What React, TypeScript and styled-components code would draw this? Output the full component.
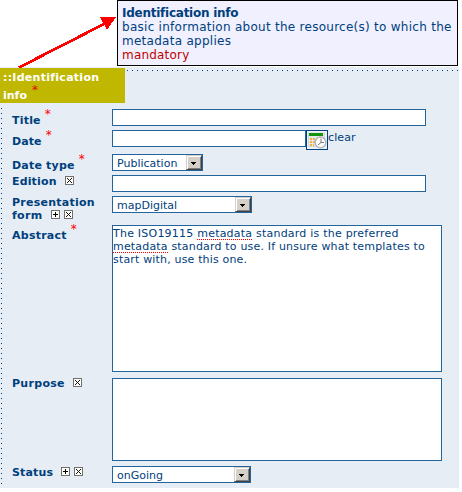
import React from "react";
import styled, { createGlobalStyle } from "styled-components";

const navy = "#00407c";
const edge = "#24649c";

const Global = createGlobalStyle`
  * { box-sizing: border-box; }
  html, body { margin: 0; padding: 0; background: #fff; overflow: hidden; }
  body { font-family: "DejaVu Sans", Verdana, sans-serif; color: ${navy}; }
`;

const Page = styled.main`
  position: relative;
  width: 459px;
  height: 488px;
  overflow: hidden;
`;

const Header = styled.header`
  height: 67px;
  padding-left: 117px;
`;

const Tip = styled.section`
  width: 341px;
  height: 66px;
  padding: 5px 0 0 4px;
  border: 1px solid #000;
  background: #f0f0ff;
`;

const TipLine = styled.p<{ $bold?: boolean; $red?: boolean; $track: number }>`
  margin: 0;
  height: 14px;
  font-size: 12px;
  line-height: 14px;
  white-space: nowrap;
  font-weight: ${(p) => (p.$bold ? 700 : 400)};
  color: ${(p) => (p.$red ? "#c00000" : navy)};
  letter-spacing: ${(p) => p.$track}px;
`;

const Arrow = styled.svg`
  position: absolute;
  left: 0;
  top: 0;
`;

const Panel = styled.section`
  height: 421px;
  padding-top: 1px;
  background:
    repeating-linear-gradient(to bottom, #e6edf5 0 4px, ${navy} 4px 5px) 1px 37px / 1px 384px no-repeat,
    repeating-linear-gradient(to right, #e6edf5 0 4px, ${navy} 4px 5px) 123px 3px / 336px 1px no-repeat,
    #e6edf5;
`;

const Legend = styled.h2`
  width: 125px;
  height: 35px;
  margin: 0 0 6px;
  padding: 1px 0 0 3px;
  background: #c0b800;
  color: #fff;
  font-size: 11px;
  line-height: 18px;
`;

const LegendLine = styled.div<{ $track: number }>`
  display: flex;
  height: 18px;
  white-space: nowrap;
  letter-spacing: ${(p) => p.$track}px;
`;

const Star = styled.sup`
  width: 9px;
  height: 11px;
  margin: -7px 0 0 4px;
  color: #f00;
  font-size: 12px;
  font-weight: 400;
  line-height: 14px;
  letter-spacing: 0;
`;

const LegendStar = styled(Star)`
  margin: -4px 0 0 5px;
  color: #e80000;
`;

const Row = styled.div<{ $h: number }>`
  display: grid;
  grid-template-columns: 100px 347px;
  height: ${(p) => p.$h}px;
  padding-left: 12px;
`;

const Label = styled.div<{ $top: number }>`
  margin-top: ${(p) => p.$top}px;
  font-size: 11px;
  font-weight: 700;
  line-height: 13px;
`;

const LabelLine = styled.div`
  display: flex;
  height: 13px;
  white-space: nowrap;
`;

const Word = styled.span<{ $track: number }>`
  letter-spacing: ${(p) => p.$track}px;
`;

const Tools = styled.span<{ $gap: number }>`
  display: flex;
  gap: 4px;
  margin: 1px 0 0 ${(p) => p.$gap}px;
  height: 9px;
`;

const Controls = styled.div`
  display: flex;
  align-items: flex-start;
`;

const Field = styled.div<{ $w: number; $h?: number }>`
  width: ${(p) => p.$w}px;
  height: ${(p) => p.$h ?? 17}px;
  border: 1px solid ${edge};
  background: #fff;
  font-size: 11px;
  line-height: 13px;
`;

const TextArea = styled(Field)`
  padding-top: 1px;
`;

const TextLine = styled.div<{ $track: number }>`
  height: 13px;
  white-space: nowrap;
  letter-spacing: ${(p) => p.$track}px;
`;

const Misspelt = styled.span`
  background: linear-gradient(to right, #f00 50%, transparent 50%) 0 100% / 2px 1px repeat-x;
`;

const SelectBox = styled(Field)`
  display: flex;
  justify-content: space-between;
  padding-left: 4px;
  line-height: 17px;
`;

const DropButton = styled.span`
  width: 16px;
  height: 15px;
  border: 1px solid #d4d0c8;
  border-right-color: #404040;
  border-bottom-color: #404040;
  background: #d4d0c8;
  box-shadow: inset 1px 1px #fff, inset -1px -1px #808080;
  line-height: 0;
`;

const CalendarButton = styled.span`
  width: 22px;
  height: 20px;
  border: 1px solid ${navy};
  background: #edf2fa;
  line-height: 0;
`;

const Clear = styled.span`
  font-size: 11px;
  line-height: 15px;
  letter-spacing: 0.1px;
`;

function Tool({ kind }: { kind: "add" | "remove" }) {
  return (
    <svg width="9" height="9" shapeRendering="crispEdges" viewBox="0 0 9 9">
      <rect x=".5" y=".5" width="8" height="8" fill="#fffff8" stroke="#707070" />
      {kind === "add" ? (
        <path d="M2 4.5h5M4.5 2v5" stroke="#000" />
      ) : (
        <path d="M2 2h1v1h1v1h1v-1h1v-1h1v1h-1v1h-1v1h1v1h1v1h-1v-1h-1v-1h-1v1h-1v1h-1v-1h1v-1h1v-1h-1v-1h-1z" fill="#111" />
      )}
    </svg>
  );
}

function Select({ value, width }: { value: string; width: number }) {
  return (
    <SelectBox $w={width}>
      <span>{value}</span>
      <DropButton>
        <svg width="14" height="13" shapeRendering="crispEdges">
          <path d="M4 6h5v1H4zM5 7h3v1H5zM6 8h1v1H6z" fill="#000" />
        </svg>
      </DropButton>
    </SelectBox>
  );
}

function Calendar() {
  return (
    <svg width="20" height="18" viewBox="0 0 20 18">
      <rect x="1" y="1" width="17" height="15" rx="1" fill="#d4d4d4" />
      <rect x="2" y="1" width="15" height="14" fill="#e9e9e7" />
      <rect x="2" y="2" width="14" height="3" fill="#11940c" />
      <path d="M3 7h2v2H3zM6 7h2v2H6zM3 10h2v2H3zM6 10h2v2H6zM3 13h2v2H3zM6 13h1v2H6z" fill="#f2b341" />
      <circle cx="13.5" cy="11.4" r="5.4" fill="#fff" stroke="#b8b8b8" strokeWidth="1.6" />
      <path d="M14 7.5v4l-3 2.5M14 11.5h3" fill="none" stroke="#777" />
    </svg>
  );
}

export default function App() {
  return (
    <>
      <Global />
      <Page>
        <Header>
          <Tip>
            <TipLine $bold $track={-0.25}>Identification info</TipLine>
            <TipLine $track={0.27}>basic information about the resource(s) to which the</TipLine>
            <TipLine $track={0.27}>metadata applies</TipLine>
            <TipLine $red $track={0.2}>mandatory</TipLine>
          </Tip>
        </Header>
        <Panel>
          <Legend>
            <LegendLine $track={0.27}>::Identification</LegendLine>
            <LegendLine $track={0}>info<LegendStar>*</LegendStar></LegendLine>
          </Legend>
          <Row $h={21}>
            <Label $top={5}>
              <LabelLine><Word $track={0.2}>Title</Word><Star>*</Star></LabelLine>
            </Label>
            <Controls><Field $w={314} /></Controls>
          </Row>
          <Row $h={24}>
            <Label $top={5}>
              <LabelLine><Word $track={0.1}>Date</Word><Star>*</Star></LabelLine>
            </Label>
            <Controls>
              <Field $w={194} />
              <CalendarButton><Calendar /></CalendarButton>
              <Clear>clear</Clear>
            </Controls>
          </Row>
          <Row $h={21}>
            <Label $top={5}>
              <LabelLine><Word $track={0.2}>Date type</Word><Star>*</Star></LabelLine>
            </Label>
            <Controls><Select value="Publication" width={91} /></Controls>
          </Row>
          <Row $h={21}>
            <Label $top={0}>
              <LabelLine><Word $track={0.15}>Edition</Word><Tools $gap={8}><Tool kind="remove" /></Tools></LabelLine>
            </Label>
            <Controls><Field $w={314} /></Controls>
          </Row>
          <Row $h={29}>
            <Label $top={0}>
              <LabelLine><Word $track={0.25}>Presentation</Word></LabelLine>
              <LabelLine><Word $track={0.3}>form</Word><Tools $gap={9}><Tool kind="add" /><Tool kind="remove" /></Tools></LabelLine>
            </Label>
            <Controls><Select value="mapDigital" width={140} /></Controls>
          </Row>
          <Row $h={153}>
            <Label $top={4}>
              <LabelLine><Word $track={0.25}>Abstract</Word><Star>*</Star></LabelLine>
            </Label>
            <Controls>
              <TextArea $w={330} $h={147}>
                <TextLine $track={0.22}>The ISO19115 <Misspelt>metadata</Misspelt> standard is the preferred</TextLine>
                <TextLine $track={0.18}><Misspelt>metadata</Misspelt> standard to use. If unsure what templates to</TextLine>
                <TextLine $track={0.17}>start with, use this one.</TextLine>
              </TextArea>
            </Controls>
          </Row>
          <Row $h={88}>
            <Label $top={-1}>
              <LabelLine><Word $track={0.3}>Purpose</Word><Tools $gap={8}><Tool kind="remove" /></Tools></LabelLine>
            </Label>
            <Controls><TextArea $w={330} $h={83} /></Controls>
          </Row>
          <Row $h={22}>
            <Label $top={0}>
              <LabelLine><Word $track={0.15}>Status</Word><Tools $gap={8}><Tool kind="add" /><Tool kind="remove" /></Tools></LabelLine>
            </Label>
            <Controls><Select value="onGoing" width={139} /></Controls>
          </Row>
        </Panel>
        <Arrow width="120" height="70" viewBox="0 0 120 70" shapeRendering="crispEdges">
          <path d="M19 67.5L106 23" stroke="#f00" strokeWidth="2.8" />
          <path d="M100 17H116L107 30Z" fill="#f00" />
        </Arrow>
      </Page>
    </>
  );
}
